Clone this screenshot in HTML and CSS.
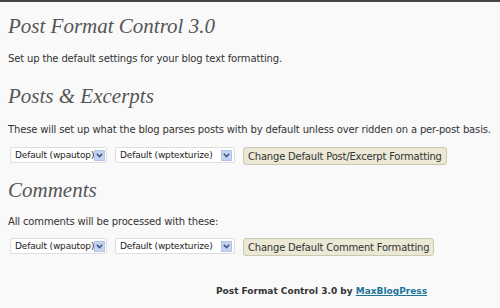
FILE: index.html
```html
<!DOCTYPE html>
<html lang="en">
<head>
<meta charset="utf-8"/>
<title>Post Format Control 3.0</title>
<link rel="stylesheet" href="styles.css">
</head>
<body>
<div class="topbar"></div>
<div class="wrap">
<h2 class="title">Post Format Control 3.0</h2>
<p class="intro">Set up the default settings for your blog text formatting.</p>

<h2 class="section">Posts &amp; Excerpts</h2>
<p>These will set up what the blog parses posts with by default unless over ridden on a per-post basis.</p>
<form class="row">
<div class="select sel-auto"><span>Default (wpautop)</span><span class="arrow"><svg width="7" height="5" viewBox="0 0 7 5"><path d="M0.8 0.8 L3.5 3.6 L6.2 0.8" fill="none" stroke="#3f5382" stroke-width="1.5"/></svg></span></div>
<div class="select sel-tex"><span>Default (wptexturize)</span><span class="arrow"><svg width="7" height="5" viewBox="0 0 7 5"><path d="M0.8 0.8 L3.5 3.6 L6.2 0.8" fill="none" stroke="#3f5382" stroke-width="1.5"/></svg></span></div>
<button type="button">Change Default Post/Excerpt Formatting</button>
</form>

<h2 class="section after-row">Comments</h2>
<p class="tight">All comments will be processed with these:</p>
<form class="row">
<div class="select sel-auto"><span>Default (wpautop)</span><span class="arrow"><svg width="7" height="5" viewBox="0 0 7 5"><path d="M0.8 0.8 L3.5 3.6 L6.2 0.8" fill="none" stroke="#3f5382" stroke-width="1.5"/></svg></span></div>
<div class="select sel-tex"><span>Default (wptexturize)</span><span class="arrow"><svg width="7" height="5" viewBox="0 0 7 5"><path d="M0.8 0.8 L3.5 3.6 L6.2 0.8" fill="none" stroke="#3f5382" stroke-width="1.5"/></svg></span></div>
<button type="button">Change Default Comment Formatting</button>
</form>

<div class="credit">Post Format Control 3.0 by <a href="#">MaxBlogPress</a></div>
</div>
</body>
</html>
```

FILE: styles.css
```css
body {
  margin: 0;
  background-color: #f9f9f9;
  font-family: 'DejaVu Sans', Verdana, sans-serif;
  font-size: 10px;
  letter-spacing: -0.15px;
  color: #333;
}
.topbar {
  height: 2px;
  background-color: #464646;
}
.wrap {
  padding: 0 0 0 8px;
}
h2 {
  font-family: 'Liberation Serif', Georgia, serif;
  font-style: italic;
  font-weight: normal;
  font-size: 21px;
  letter-spacing: 0;
  color: #555;
  line-height: 24px;
  margin: 0;
}
h2.title {
  margin-top: 12px;
}
h2.section {
  margin-top: 19px;
}
h2.after-row {
  margin-top: 13px;
}
p {
  margin: 15px 0 0;
  line-height: 13px;
  white-space: nowrap;
}
p.intro {
  margin-top: 14px;
}
p.tight {
  margin-top: 13px;
}
.row {
  display: flex;
  align-items: flex-start;
  margin: 11px 0 0 2px;
}
p.tight + .row {
  margin-top: 10px;
}
.select {
  display: flex;
  align-items: center;
  justify-content: space-between;
  height: 16px;
  box-sizing: border-box;
  background: #fff;
  border: 1px solid #dedede;
  border-radius: 2px;
  padding: 0 1px 0 4px;
  margin-right: 8px;
  font-size: 9px;
  letter-spacing: -0.15px;
  white-space: nowrap;
  color: #222;
}
.sel-auto { width: 97px; }
.sel-tex { width: 120px; padding-right: 2px; }
.arrow {
  display: flex;
  align-items: center;
  justify-content: center;
  flex-shrink: 0;
  width: 11px;
  height: 11px;
  background: #c3d3f0;
  border: 1px solid #b2c3e6;
  box-sizing: border-box;
}
button {
  font-family: 'DejaVu Sans', Verdana, sans-serif;
  font-size: 10px;
  letter-spacing: -0.2px;
  color: #333;
  background: #ebe8d6;
  border: 1px solid #cbc7b1;
  border-radius: 3px;
  height: 18px;
  padding: 0 4px;
}
.credit {
  margin: 29px 0 0 208px;
  font-size: 9px;
  font-weight: bold;
  letter-spacing: 0;
  line-height: 13px;
  color: #333;
}
.credit a {
  color: #21759b;
}
```
